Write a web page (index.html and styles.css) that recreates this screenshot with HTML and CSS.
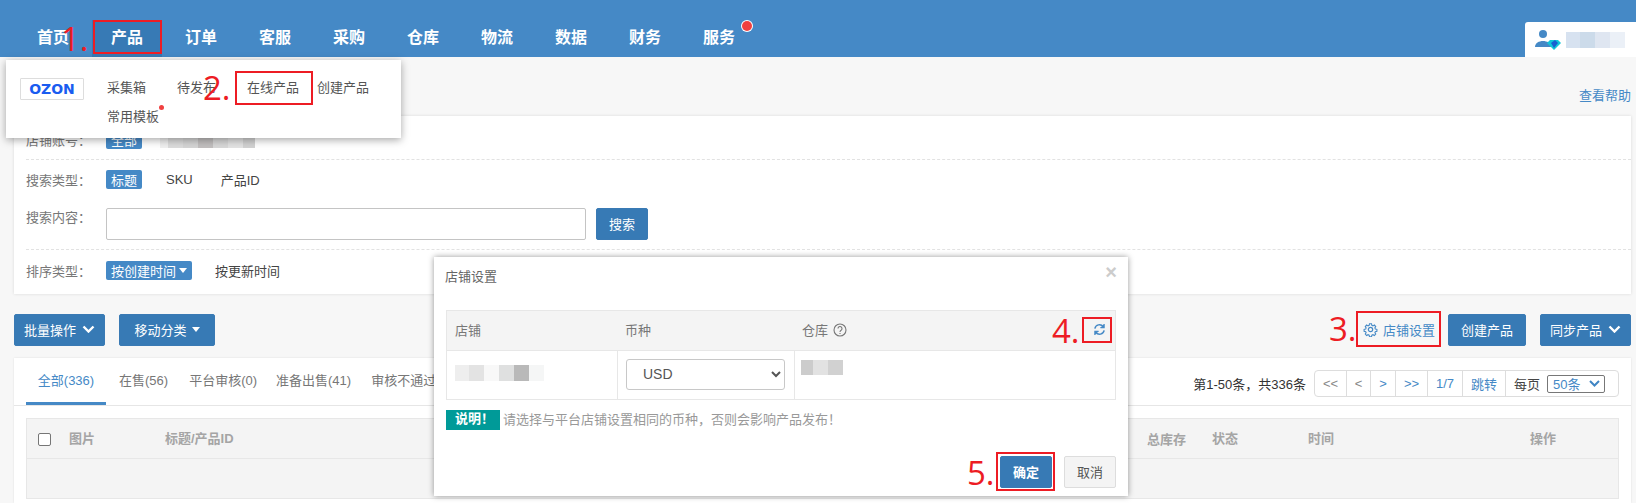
FILE: index.html
```html
<!DOCTYPE html>
<html lang="en">
<head>
    <meta charset="UTF-8">
    <meta name="viewport" content="width=device-width, initial-scale=1.0">
    <title>店铺设置</title>
    <link rel="stylesheet" href="styles.css">
</head>
<body>
    <header class="top-bar">
        <nav class="top-nav">
            <a class="nav-item">首页</a>
            <a class="nav-item active">产品</a>
            <a class="nav-item">订单</a>
            <a class="nav-item">客服</a>
            <a class="nav-item">采购</a>
            <a class="nav-item">仓库</a>
            <a class="nav-item">物流</a>
            <a class="nav-item">数据</a>
            <a class="nav-item">财务</a>
            <a class="nav-item has-dot">服务</a>
        </nav>
        <div class="user-box">
            <svg class="user-icon" width="28" height="22" viewBox="0 0 28 22">
                <circle cx="9" cy="5" r="4" fill="#4589c6"/>
                <path d="M1 18c0-4 4-6 8-6s8 2 8 6z" fill="#4589c6"/>
                <polygon points="13,14 16,11 24,11 27,14 20,21" fill="#12c6d8"/>
                <polygon points="17,14 21,11 24,14 20,19" fill="#1a5fd0"/>
            </svg>
            <span class="blur blur-user"></span>
        </div>
    </header>

    <main class="content">
        <div class="help-row"><a class="help-link">查看帮助</a></div>

        <section class="card filter-card">
            <div class="filter-row row-shop">
                <span class="filter-label">店铺账号：</span>
                <span class="tag">全部</span>
                <span class="blur blur-shop"></span>
            </div>
            <div class="filter-row row-type">
                <span class="filter-label">搜索类型：</span>
                <span class="tag">标题</span>
                <span class="filter-opt">SKU</span>
                <span class="filter-opt">产品ID</span>
            </div>
            <div class="filter-row row-search">
                <span class="filter-label">搜索内容：</span>
                <input class="search-input" type="text">
                <button class="btn btn-small">搜索</button>
            </div>
            <div class="filter-row row-sort">
                <span class="filter-label">排序类型：</span>
                <span class="tag">按创建时间<i class="caret"></i></span>
                <span class="filter-opt">按更新时间</span>
            </div>
        </section>

        <div class="toolbar">
            <div class="toolbar-group">
                <button class="btn btn-batch">批量操作<svg class="chevron" width="13" height="8" viewBox="0 0 13 8"><path d="M1.5 1.5l5 5 5-5" fill="none" stroke="#fff" stroke-width="2.4"/></svg></button>
                <button class="btn btn-move">移动分类<i class="caret"></i></button>
            </div>
            <div class="toolbar-group">
                <a class="shop-settings">
                    <svg width="15" height="15" viewBox="0 0 16 16" fill="none" stroke="#4589c6" stroke-width="1.3">
                        <circle cx="8" cy="8" r="2.3"/>
                        <path d="M6.8 1.2h2.4l.4 1.9 1.3.6 1.7-1 1.6 1.8-1 1.6.5 1.3 1.9.4v2.3l-1.9.4-.5 1.3 1 1.6-1.6 1.8-1.7-1-1.3.5-.4 1.9H6.8l-.4-1.9-1.3-.5-1.7 1-1.6-1.8 1-1.6-.5-1.3-1.9-.4V7.8l1.9-.4.5-1.3-1-1.6 1.6-1.8 1.7 1 1.3-.6z" transform="translate(.8 .8) scale(.9)"/>
                    </svg>
                    店铺设置
                </a>
                <button class="btn btn-create">创建产品</button>
                <button class="btn btn-batch">同步产品<svg class="chevron" width="13" height="8" viewBox="0 0 13 8"><path d="M1.5 1.5l5 5 5-5" fill="none" stroke="#fff" stroke-width="2.4"/></svg></button>
            </div>
        </div>

        <section class="card list-card">
            <div class="tab-bar">
                <div class="tabs">
                    <a class="tab active">全部(336)</a>
                    <a class="tab">在售(56)</a>
                    <a class="tab">平台审核(0)</a>
                    <a class="tab">准备出售(41)</a>
                    <a class="tab">审核不通过</a>
                </div>
                <div class="pager-wrap">
                    <span class="pager-total">第1-50条，共336条</span>
                    <div class="pager">
                        <a class="page-cell cell-first">&lt;&lt;</a>
                        <a class="page-cell cell-prev">&lt;</a>
                        <a class="page-cell cell-next">&gt;</a>
                        <a class="page-cell cell-last">&gt;&gt;</a>
                        <a class="page-cell cell-num">1/7</a>
                        <a class="page-cell cell-jump">跳转</a>
                        <div class="page-size">每页
                            <span class="size-select">50条<svg width="11" height="7" viewBox="0 0 11 7"><path d="M1 1l4.5 4.5L10 1" fill="none" stroke="#3f85c4" stroke-width="2"/></svg></span>
                        </div>
                    </div>
                </div>
            </div>
            <div class="table-wrap">
                <div class="table-head">
                    <span class="check-box"></span>
                    <span class="col col-pic">图片</span>
                    <span class="col col-title">标题/产品ID</span>
                    <span class="col col-stock">总库存</span>
                    <span class="col col-status">状态</span>
                    <span class="col col-time">时间</span>
                    <span class="col col-action">操作</span>
                </div>
                <div class="table-empty"></div>
            </div>
        </section>
    </main>

    <!-- dropdown under 产品 -->
    <div class="nav-menu">
        <div class="ozon-logo">OZON</div>
        <div class="menu-links">
            <a class="menu-link">采集箱</a>
            <a class="menu-link">待发布</a>
            <a class="menu-link">在线产品</a>
            <a class="menu-link last">创建产品</a>
            <a class="menu-link has-dot">常用模板</a>
        </div>
    </div>

    <!-- shop settings dialog -->
    <div class="modal">
        <div class="modal-head">
            <span class="modal-title">店铺设置</span>
            <span class="modal-close">×</span>
        </div>
        <div class="modal-table">
            <div class="modal-row modal-row-head">
                <div class="cell cell-shop">店铺</div>
                <div class="cell cell-currency">币种</div>
                <div class="cell cell-store">仓库
                    <svg class="help-icon" width="14" height="14" viewBox="0 0 14 14" fill="none" stroke="#777" stroke-width="1.1">
                        <circle cx="7" cy="7" r="6"/>
                        <path d="M5 5.5a2 2 0 1 1 3.1 1.7C7.3 7.7 7 8 7 9"/>
                        <path d="M7 10v1"/>
                    </svg>
                    <svg class="refresh-icon" width="13" height="13" viewBox="0 0 14 14" fill="none" stroke="#4589c6" stroke-width="1.6">
                        <path d="M2 6a5 5 0 0 1 9-2"/>
                        <path d="M12 1v4H8" stroke-width="1.2" fill="#4589c6"/>
                        <path d="M12 8a5 5 0 0 1-9 2"/>
                        <path d="M2 13V9h4" stroke-width="1.2" fill="#4589c6"/>
                    </svg>
                </div>
            </div>
            <div class="modal-row modal-row-body">
                <div class="cell cell-shop"><span class="blur blur-modal-shop"></span></div>
                <div class="cell cell-currency">
                    <select class="currency-select"><option>USD</option></select>
                </div>
                <div class="cell cell-store"><span class="blur blur-store"></span></div>
            </div>
        </div>
        <div class="modal-note">
            <span class="note-tag">说明！</span>
            <span class="note-text">请选择与平台店铺设置相同的币种，否则会影响产品发布！</span>
        </div>
        <div class="modal-foot">
            <button class="btn btn-ok">确定</button>
            <button class="btn-cancel">取消</button>
        </div>
    </div>

    <!-- red tutorial marks drawn on top of the screenshot -->
    <span class="step-num step-1">1.</span>
    <span class="step-box box-1"></span>
    <span class="step-num step-2">2.</span>
    <span class="step-box box-2"></span>
    <span class="step-num step-3">3.</span>
    <span class="step-box box-3"></span>
    <span class="step-num step-4">4.</span>
    <span class="step-box box-4"></span>
    <span class="step-num step-5">5.</span>
    <span class="step-box box-5"></span>
</body>
</html>
```

FILE: styles.css
```css
* {
    box-sizing: border-box;
}

html, body {
    height: 503px;
    overflow: hidden;
}

body {
    position: relative;
    margin: 0;
    padding: 0;
    font-family: "Liberation Sans", "Noto Sans CJK SC", sans-serif;
    font-size: 13px;
    color: #555;
    background-color: #f7f7f7;
}

/* top bar */
.top-bar {
    display: flex;
    justify-content: space-between;
    align-items: flex-end;
    height: 57px;
    background-color: #4589c6;
}

.top-nav {
    display: flex;
    gap: 4px;
    margin-left: 18px;
}

.nav-item {
    position: relative;
    width: 70px;
    height: 37px;
    line-height: 35px;
    text-align: center;
    font-size: 16px;
    font-weight: bold;
    color: #fff;
}

.nav-item.active {
    background-color: #377ab5;
}

.nav-item.has-dot::after {
    content: "";
    position: absolute;
    top: 1px;
    right: 2px;
    width: 10px;
    height: 10px;
    border-radius: 50%;
    background-color: #f04040;
    box-shadow: 0 0 0 1px #fff;
}

.user-box {
    display: flex;
    align-items: center;
    gap: 4px;
    width: 111px;
    height: 35px;
    padding-left: 9px;
    background-color: #fff;
    border-top-left-radius: 3px;
}

.blur {
    display: block;
}

.blur-user {
    width: 59px;
    height: 16px;
    background: linear-gradient(90deg, #d7e2f0 0 14px, #ccdbea 14px 29px, #dfe6f1 29px 44px, #ebf0f7 44px);
}

/* page content */
.content {
    padding: 0 5px 0 14px;
}

.help-row {
    display: flex;
    justify-content: flex-end;
    align-items: flex-end;
    height: 59px;
    padding-bottom: 12px;
}

.help-link {
    color: #4589c6;
}

.card {
    background-color: #fff;
    box-shadow: 0 0 3px rgba(0, 0, 0, 0.12);
}

.filter-card {
    height: 178px;
    padding: 0 0 0 12px;
}

.filter-row {
    display: flex;
    align-items: center;
    border-bottom: 1px dashed #e2e2e2;
}

.row-shop {
    height: 44px;
    padding-top: 3px;
}

.row-type {
    height: 38px;
    border-bottom: 0;
}

.row-search {
    height: 52px;
    align-items: flex-start;
    padding-top: 10px;
}

.row-sort {
    height: 42px;
    padding-bottom: 2px;
    border-bottom: 0;
}

.filter-label {
    width: 80px;
    color: #777;
}

.row-search .filter-label {
    line-height: 20px;
}

.tag {
    display: inline-flex;
    align-items: center;
    height: 19px;
    padding: 0 5px;
    border-radius: 2px;
    font-size: 13px;
    color: #fff;
    background-color: #4589c6;
}

.blur-shop {
    width: 95px;
    height: 18px;
    margin-left: 18px;
    background: linear-gradient(90deg, #f0f0f0 0 8px, #dcdcdc 8px 23px, #d5d5d5 23px 38px, #c2bfbf 38px 53px, #d8d8d8 53px 68px, #e3e3e3 68px 83px, #d2d2d2 83px);
}

.filter-opt {
    margin-left: 23px;
    color: #444;
}

.row-type .filter-opt {
    margin-left: 24px;
}

.row-type .filter-opt + .filter-opt {
    margin-left: 28px;
}

.search-input {
    width: 480px;
    height: 32px;
    border: 1px solid #c4c4c4;
    border-radius: 2px;
    background-color: #fff;
}

.caret {
    display: inline-block;
    margin-left: 3px;
    border-top: 5px solid #fff;
    border-left: 4px solid transparent;
    border-right: 4px solid transparent;
}

.btn {
    display: inline-flex;
    align-items: center;
    justify-content: center;
    height: 32px;
    padding: 0 0 2px;
    border: 1px solid #3a7ab4;
    border-radius: 2px;
    font-family: inherit;
    font-size: 13px;
    color: #fff;
    background-color: #377ab5;
}

.btn-small {
    width: 52px;
    margin-left: 10px;
}

/* toolbar */
.toolbar {
    display: flex;
    justify-content: space-between;
    align-items: center;
    height: 32px;
    margin: 20px 0 12px;
}

.toolbar-group {
    display: flex;
    align-items: center;
    gap: 14px;
}

.btn-batch {
    width: 91px;
    gap: 6px;
}

.btn-move {
    width: 96px;
    gap: 2px;
}

.btn-create {
    width: 78px;
    margin-left: 1px;
}

.shop-settings {
    display: flex;
    align-items: center;
    gap: 5px;
    color: #4589c6;
    margin-right: -2px;
    padding-bottom: 2px;
}

/* list */
.list-card {
    height: 145px;
    padding: 0 12px;
    box-shadow: 0 0 2px rgba(0, 0, 0, 0.1);
}

.tab-bar {
    display: flex;
    justify-content: space-between;
    align-items: flex-start;
    height: 48px;
    margin: 0 -12px;
    padding: 0 12px;
    border-bottom: 1px solid #e6e6e6;
}

.tabs {
    display: flex;
}

.tab {
    height: 47px;
    line-height: 45px;
    padding: 0 12px;
    margin-right: -1px;
    white-space: nowrap;
    color: #777;
}

.tab:first-child {
    width: 80px;
    padding: 0;
    text-align: center;
    margin-right: 1px;
}

.tab:nth-child(2) { padding: 0 12px; }
.tab:nth-child(3) { padding: 0 10px; }
.tab:nth-child(4) { padding: 0 10px; }
.tab:nth-child(5) { padding: 0 11px; }

.tab.active {
    color: #4589c6;
    border-bottom: 3px solid #4589c6;
}

.pager-wrap {
    display: flex;
    align-items: center;
    gap: 8px;
    height: 27px;
    margin-top: 12px;
}

.pager-total {
    color: #333;
}

.pager {
    display: flex;
    align-items: stretch;
    width: 305px;
    height: 27px;
    border: 1px solid #ddd;
    border-radius: 4px;
}

.page-cell {
    display: flex;
    align-items: center;
    justify-content: center;
    border-right: 1px solid #ddd;
    color: #4589c6;
}

.cell-first { width: 32px; color: #888; }
.cell-prev { width: 24px; color: #888; }
.cell-next { width: 25px; }
.cell-last { width: 32px; }
.cell-num { width: 35px; }
.cell-jump { width: 43px; }

.page-size {
    display: flex;
    align-items: center;
    gap: 7px;
    padding-left: 8px;
    color: #444;
}

.size-select {
    display: flex;
    align-items: center;
    justify-content: space-between;
    width: 58px;
    height: 18px;
    padding: 0 4px 0 5px;
    border: 1px solid #777;
    border-radius: 2px;
    color: #4589c6;
}

.table-wrap {
    margin-top: 12px;
    border: 1px solid #e7e7e7;
    border-bottom: 0;
}

.table-head {
    display: flex;
    align-items: center;
    height: 40px;
    padding-bottom: 2px;
    background-color: #f4f4f4;
    border-bottom: 1px solid #e7e7e7;
    font-weight: bold;
    color: #a5a5a5;
}

.check-box {
    width: 13px;
    height: 13px;
    margin: 3px 0 0 11px;
    border: 1px solid #767676;
    border-radius: 2px;
    background-color: #fff;
}

.col-pic { margin-left: 18px; width: 96px; }
.col-title { width: 982px; }
.col-stock { width: 65px; margin-top: 1px; }
.col-status { width: 96px; }
.col-time { width: 222px; }

.table-empty {
    height: 40px;
    background-color: #f4f4f4;
    border-bottom: 1px solid #e7e7e7;
}

/* menu under 产品 */
.nav-menu {
    position: absolute;
    top: 60px;
    left: 6px;
    display: flex;
    width: 395px;
    height: 78px;
    padding: 18px 14px;
    background-color: #fff;
    box-shadow: 0 2px 8px rgba(0, 0, 0, 0.35);
}

.ozon-logo {
    flex: none;
    width: 64px;
    height: 22px;
    line-height: 20px;
    text-align: center;
    border: 1px solid #ddd;
    border-radius: 1px;
    font-family: "DejaVu Sans", sans-serif;
    font-size: 14px;
    font-weight: bold;
    color: #1a5cf0;
}

.menu-links {
    display: flex;
    flex-wrap: wrap;
    align-content: flex-start;
    column-gap: 31px;
    row-gap: 9px;
    margin-left: 23px;
}

.menu-link {
    position: relative;
    height: 20px;
    line-height: 20px;
    color: #555;
}

.menu-link:nth-child(3) {
    margin-right: -13px;
}

.menu-link.has-dot::after {
    content: "";
    position: absolute;
    top: -2px;
    right: -5px;
    width: 5px;
    height: 5px;
    border-radius: 50%;
    background-color: #f04040;
}

/* dialog */
.modal {
    position: absolute;
    top: 257px;
    left: 434px;
    width: 694px;
    height: 239px;
    padding: 0 12px;
    background-color: #fff;
    box-shadow: 0 0 6px rgba(0, 0, 0, 0.4);
}

.modal-head {
    display: flex;
    justify-content: space-between;
    align-items: center;
    height: 36px;
    margin-left: -1px;
}

.modal-title {
    color: #666;
}

.modal-close {
    margin-right: -1px;
    margin-top: -6px;
    font-size: 20px;
    font-weight: bold;
    color: #ccc;
}

.modal-table {
    margin-top: 17px;
    border: 1px solid #e7e7e7;
}

.modal-row {
    display: flex;
}

.modal-row-head {
    height: 40px;
    padding-bottom: 2px;
    background-color: #f4f4f4;
    border-bottom: 1px solid #e7e7e7;
    color: #777;
}

.modal-row-body {
    height: 48px;
}

.cell {
    display: flex;
    align-items: center;
    padding-left: 8px;
}

.cell-shop {
    width: 170px;
}

.cell-currency {
    width: 177px;
    padding-left: 8px;
}

.modal-row-body .cell-currency,
.modal-row-body .cell-store {
    border-left: 1px solid #e7e7e7;
}

.cell-store {
    flex: 1;
    gap: 5px;
}

.refresh-icon {
    margin-left: auto;
    margin-right: 9px;
}

.blur-modal-shop {
    width: 89px;
    height: 16px;
    margin-top: -4px;
    background: linear-gradient(90deg, #eeeeee 0 14px, #e3e3e3 14px 29px, #f8f8f8 29px 44px, #dfe0e0 44px 59px, #b9b9b9 59px 74px, #f5f6f6 74px);
}

.blur-store {
    width: 42px;
    height: 15px;
    margin: -15px 0 0 -2px;
    background: linear-gradient(90deg, #cccccc 0 12px, #e2e2e2 12px 27px, #d1d1d1 27px);
}

.currency-select {
    width: 159px;
    height: 31px;
    margin-top: -2px;
    padding-left: 12px;
    border: 1px solid #c8c8c8;
    border-radius: 3px;
    font-family: inherit;
    font-size: 14px;
    color: #555;
    background-color: #fff;
}

.modal-note {
    display: flex;
    align-items: center;
    gap: 3px;
    margin-top: 10px;
}

.note-tag {
    width: 54px;
    height: 20px;
    line-height: 17px;
    padding-left: 9px;
    font-weight: bold;
    color: #fff;
    background-color: #009a98;
}

.note-text {
    margin-top: -3px;
    color: #999;
}

.modal-foot {
    display: flex;
    justify-content: flex-end;
    gap: 12px;
    margin-top: 26px;
}

.btn-ok {
    width: 52px;
    font-weight: bold;
}

.btn-cancel {
    width: 52px;
    height: 32px;
    padding: 0 0 2px;
    border: 1px solid #ddd;
    border-radius: 2px;
    font-family: inherit;
    font-size: 13px;
    color: #555;
    background-color: #f4f4f4;
}

/* red tutorial marks */
.step-num {
    position: absolute;
    font-family: "Open Sans", sans-serif;
    font-size: 33px;
    line-height: 1;
    color: #ed1c24;
}

.step-1 { left: 61px; top: 22px; }
.step-2 { left: 203px; top: 71px; }
.step-3 { left: 1329px; top: 312px; }
.step-4 { left: 1052px; top: 314px; }
.step-5 { left: 967px; top: 456px; }

.step-box {
    position: absolute;
    border: 2px solid #ed1c24;
}

.box-1 { left: 93px; top: 20px; width: 69px; height: 34px; }
.box-2 { left: 235px; top: 71px; width: 78px; height: 34px; }
.box-3 { left: 1356px; top: 311px; width: 85px; height: 36px; }
.box-4 { left: 1082px; top: 317px; width: 30px; height: 26px; }
.box-5 { left: 996px; top: 452px; width: 59px; height: 39px; }
```
